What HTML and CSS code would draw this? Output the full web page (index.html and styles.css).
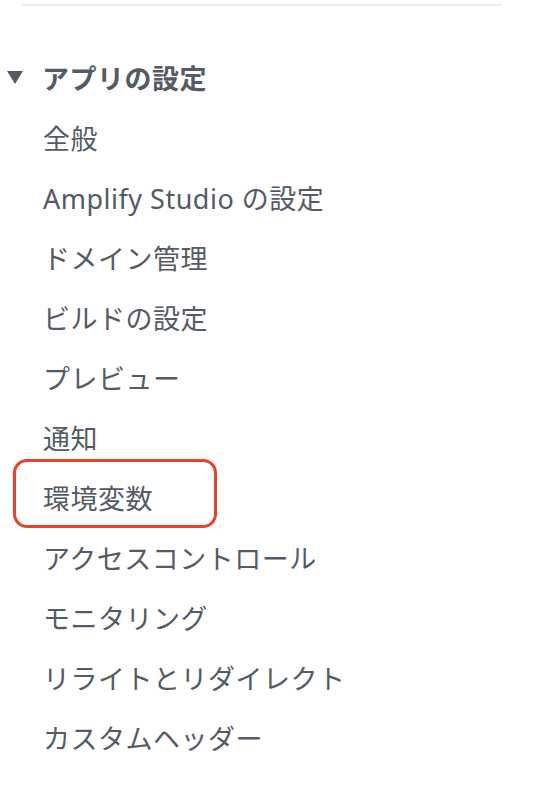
FILE: index.html
```html
<!DOCTYPE html>
<html lang="ja">
<head>
    <meta charset="UTF-8">
    <meta name="viewport" content="width=device-width, initial-scale=1.0">
    <title>アプリの設定</title>
    <link rel="stylesheet" href="styles.css">
</head>
<body>
    <nav class="side-nav">
        <div class="divider"></div>

        <div class="section">
            <div class="section-header">
                <span class="caret"></span>
                <span class="section-title">アプリの設定</span>
            </div>
            <ul class="nav-list">
                <li><a href="#">全般</a></li>
                <li><a href="#">Amplify Studio の設定</a></li>
                <li><a href="#">ドメイン管理</a></li>
                <li><a href="#">ビルドの設定</a></li>
                <li><a href="#">プレビュー</a></li>
                <li><a href="#">通知</a></li>
                <li class="highlight"><a href="#">環境変数</a></li>
                <li><a href="#">アクセスコントロール</a></li>
                <li><a href="#">モニタリング</a></li>
                <li><a href="#">リライトとリダイレクト</a></li>
                <li><a href="#">カスタムヘッダー</a></li>
            </ul>
        </div>
    </nav>
</body>
</html>
```

FILE: styles.css
```css
body {
    margin: 0;
    background: #ffffff;
    font-family: "Noto Sans", "Noto Sans CJK JP", sans-serif;
    color: #545b64;
}
.side-nav {
    padding-top: 4px;
}
.divider {
    margin-left: 22px;
    width: 480px;
    height: 2px;
    background: #eaeded;
}
.section {
    margin-top: 53px;
}
.section-header {
    display: flex;
    align-items: center;
    height: 36px;
}
.caret {
    width: 0;
    height: 0;
    margin-left: 7px;
    margin-right: 19px;
    border-left: 8.5px solid transparent;
    border-right: 8.5px solid transparent;
    border-top: 13px solid #545b64;
}
.section-title {
    font-size: 27px;
    font-weight: bold;
    letter-spacing: 0.5px;
}
.nav-list {
    list-style: none;
    margin: 0;
    padding: 0;
    margin-top: 12px;
}
.nav-list li {
    height: 60px;
    display: flex;
    align-items: center;
}
.nav-list a {
    color: #545b64;
    text-decoration: none;
    font-size: 27px;
    margin-left: 43px;
    letter-spacing: 0.5px;
}
.nav-list li.highlight {
    position: relative;
}
.nav-list li.highlight::before {
    content: "";
    position: absolute;
    left: 13px;
    top: -8px;
    width: 204px;
    height: 69px;
    box-sizing: border-box;
    border: 3.5px solid #e8412c;
    border-radius: 14px;
}
```
